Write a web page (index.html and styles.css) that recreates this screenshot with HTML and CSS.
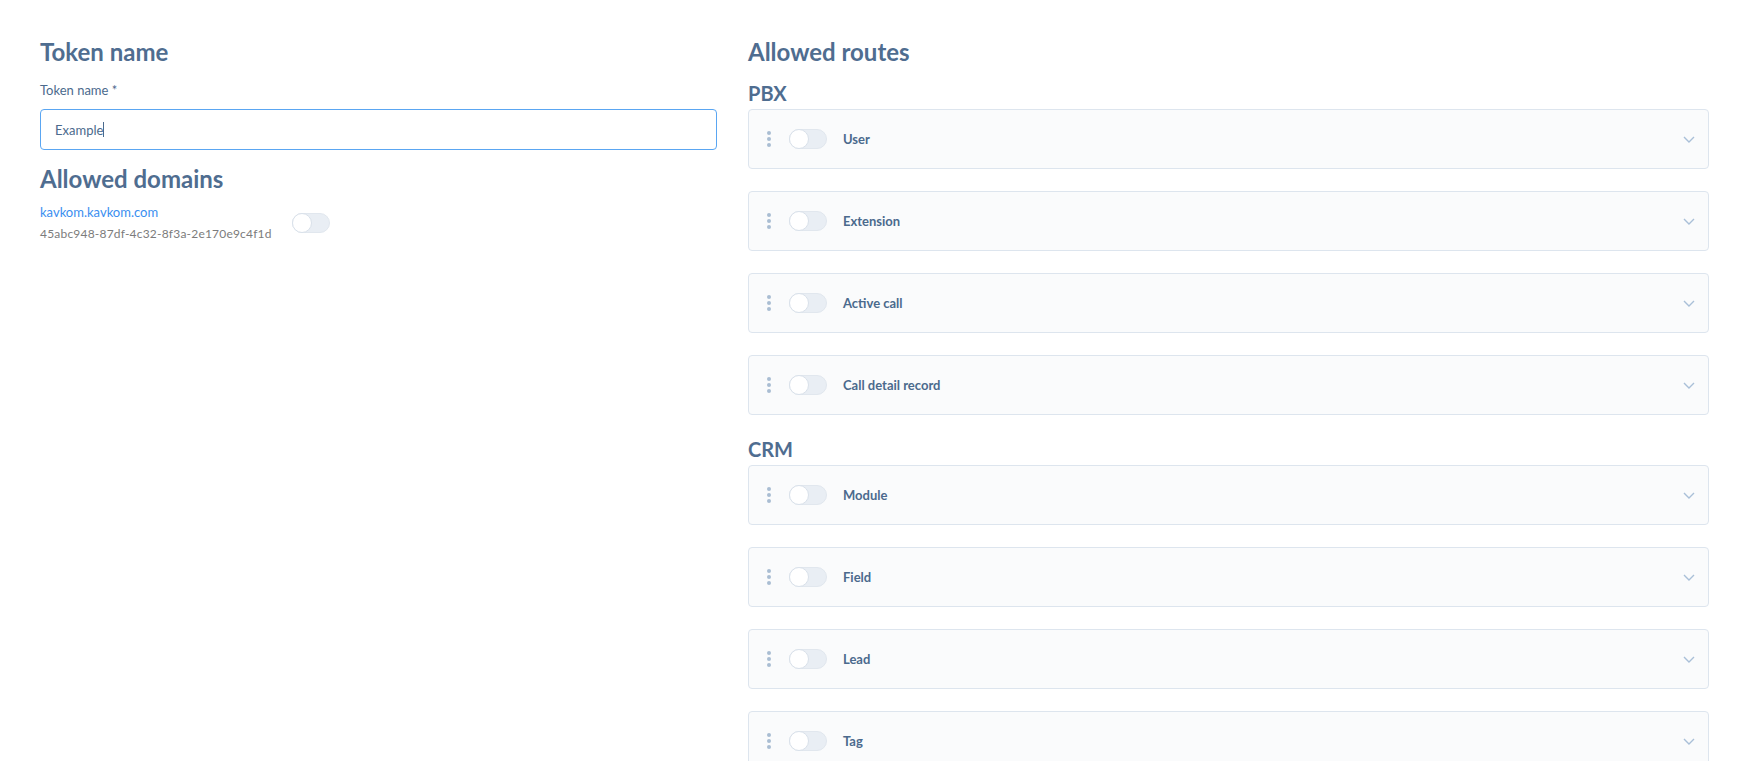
FILE: index.html
```html
<!DOCTYPE html>
<html lang="en">
    <head>
        <meta charset="UTF-8" />
        <meta name="viewport" content="width=device-width, initial-scale=1.0" />
        <title>API token</title>
        <link rel="stylesheet" href="styles.css">
    </head>
    <body>
        <div class="page">
            <div class="col-left">
                <h2 class="title">Token name</h2>
                <label class="field-label" for="token-name">Token name *</label>
                <div class="input-box">
                    <span class="input-text">Example</span><span class="caret"></span>
                </div>

                <h2 class="title title-domains">Allowed domains</h2>
                <div class="domain">
                    <div class="domain-info">
                        <a class="domain-link" href="#">kavkom.kavkom.com</a>
                        <div class="domain-uuid">45abc948-87df-4c32-8f3a-2e170e9c4f1d</div>
                    </div>
                    <span class="switch"><span class="knob"></span></span>
                </div>
            </div>

            <div class="col-right">
                <h2 class="title">Allowed routes</h2>

                <h3 class="group group-first">PBX</h3>
                <div class="route"><span class="drag"><i></i><i></i><i></i></span><span class="switch"><span class="knob"></span></span><span class="route-name">User</span><svg class="chevron" viewBox="0 0 12 7"><path d="M1 1l5 5 5-5" /></svg></div>
                <div class="route"><span class="drag"><i></i><i></i><i></i></span><span class="switch"><span class="knob"></span></span><span class="route-name">Extension</span><svg class="chevron" viewBox="0 0 12 7"><path d="M1 1l5 5 5-5" /></svg></div>
                <div class="route"><span class="drag"><i></i><i></i><i></i></span><span class="switch"><span class="knob"></span></span><span class="route-name">Active call</span><svg class="chevron" viewBox="0 0 12 7"><path d="M1 1l5 5 5-5" /></svg></div>
                <div class="route"><span class="drag"><i></i><i></i><i></i></span><span class="switch"><span class="knob"></span></span><span class="route-name">Call detail record</span><svg class="chevron" viewBox="0 0 12 7"><path d="M1 1l5 5 5-5" /></svg></div>

                <h3 class="group">CRM</h3>
                <div class="route"><span class="drag"><i></i><i></i><i></i></span><span class="switch"><span class="knob"></span></span><span class="route-name">Module</span><svg class="chevron" viewBox="0 0 12 7"><path d="M1 1l5 5 5-5" /></svg></div>
                <div class="route"><span class="drag"><i></i><i></i><i></i></span><span class="switch"><span class="knob"></span></span><span class="route-name">Field</span><svg class="chevron" viewBox="0 0 12 7"><path d="M1 1l5 5 5-5" /></svg></div>
                <div class="route"><span class="drag"><i></i><i></i><i></i></span><span class="switch"><span class="knob"></span></span><span class="route-name">Lead</span><svg class="chevron" viewBox="0 0 12 7"><path d="M1 1l5 5 5-5" /></svg></div>
                <div class="route"><span class="drag"><i></i><i></i><i></i></span><span class="switch"><span class="knob"></span></span><span class="route-name">Tag</span><svg class="chevron" viewBox="0 0 12 7"><path d="M1 1l5 5 5-5" /></svg></div>
            </div>
        </div>
    </body>
</html>
```

FILE: styles.css
```css
* {
    box-sizing: border-box;
}
body {
    margin: 0;
    font-family: Lato, "Open Sans", sans-serif;
    color: #4b6a8d;
    background: #fff;
}
.page {
    display: grid;
    grid-template-columns: 677px 1fr;
    column-gap: 31px;
    padding: 37px 37px 0 40px;
}

.title {
    margin: 0;
    font-size: 24px;
    line-height: 29px;
    font-weight: 700;
    color: #4f6d90;
}
.field-label {
    display: block;
    margin-top: 15px;
    font-size: 13px;
    line-height: 18px;
}
.input-box {
    display: flex;
    align-items: center;
    height: 41px;
    margin-top: 10px;
    padding: 0 14px;
    border: 1px solid #5aa6f2;
    border-radius: 4px;
    font-size: 13px;
}
.caret {
    width: 1px;
    height: 15px;
    background: #4b6a8d;
}
.title-domains {
    margin-top: 14px;
}
.domain {
    display: flex;
    align-items: center;
    gap: 20px;
    margin-top: 11px;
}
.domain-link {
    display: block;
    font-size: 13px;
    line-height: 16px;
    color: #3a8ef0;
    text-decoration: none;
}
.domain-uuid {
    margin-top: 6px;
    font-size: 12px;
    line-height: 15px;
    color: #7c7c7c;
    letter-spacing: 0.2px;
}

.switch {
    display: inline-block;
    flex: none;
    width: 38px;
    height: 20px;
    border-radius: 10px;
    background: #e9eef4;
    border: 1px solid #e1e7ee;
    position: relative;
}
.knob {
    position: absolute;
    top: -1px;
    left: -1px;
    width: 20px;
    height: 20px;
    border-radius: 50%;
    background: #fff;
    border: 1px solid #d9e1ea;
}

.group {
    margin: 0 0 4px;
    font-size: 20px;
    line-height: 24px;
    font-weight: 700;
    color: #4f6d90;
}
.group-first {
    margin-top: 15px;
    margin-bottom: 4px;
}
.route {
    display: flex;
    align-items: center;
    height: 60px;
    padding: 0 13px 0 18px;
    margin-bottom: 22px;
    background: #fafbfc;
    border: 1px solid #dde5ee;
    border-radius: 4px;
}
.drag {
    display: flex;
    flex-direction: column;
    gap: 2px;
    width: 4px;
    margin-right: 18px;
}
.drag i {
    display: block;
    width: 4px;
    height: 4px;
    border-radius: 50%;
    background: #a9bdd3;
}
.route-name {
    flex: 1;
    margin-left: 16px;
    font-size: 13px;
    font-weight: 700;
    color: #4b6a8d;
}
.chevron {
    width: 12px;
    height: 7px;
    fill: none;
    stroke: #a9bfd8;
    stroke-width: 1.4;
}
```
